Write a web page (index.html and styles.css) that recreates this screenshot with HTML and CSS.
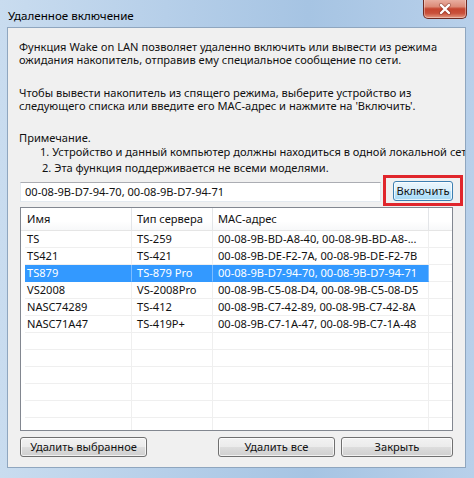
FILE: index.html
```html
<!DOCTYPE html>
<html>
<head>
<meta charset="utf-8">
<link rel="stylesheet" href="styles.css">
</head>
<body>
<div class="window">
  <div class="titlebar">
    <span class="title">Удаленное включение</span>
    <div class="close">
      <svg width="14" height="12" viewBox="0 0 14 12"><path d="M3 2 L11 10 M11 2 L3 10" stroke="#5a1a12" stroke-width="4" stroke-linecap="round" opacity="0.35"/><path d="M3 2 L11 10 M11 2 L3 10" stroke="#fff" stroke-width="2.4" stroke-linecap="round"/></svg>
    </div>
  </div>
  <div class="client">
    <p class="para">Функция Wake on LAN позволяет удаленно включить или вывести из режима<br>ожидания накопитель, отправив ему специальное сообщение по сети.</p>
    <p class="para para2">Чтобы вывести накопитель из спящего режима, выберите устройство из<br>следующего списка или введите его MAC-адрес и нажмите на 'Включить'.</p>
    <div class="note">
      <div class="note-title">Примечание.</div>
      <div class="note-item n1">1. Устройство и данный компьютер должны находиться в одной локальной сети.</div>
      <div class="note-item n2">2. Эта функция поддерживается не всеми моделями.</div>
    </div>
    <div class="mac-row">
      <div class="mac-input">00-08-9B-D7-94-70, 00-08-9B-D7-94-71</div>
      <div class="mark"><button class="btn btn-on">Включить</button></div>
    </div>
    <div class="list">
      <div class="list-head">
        <div class="hcell">Имя</div>
        <div class="hcell">Тип сервера</div>
        <div class="hcell">MAC-адрес</div>
        <div class="hcell last"></div>
      </div>
      <div class="list-body">
        <div class="row"><div class="cell c1">TS</div><div class="cell">TS-259</div><div class="cell">00-08-9B-BD-A8-40, 00-08-9B-BD-A8-...</div><div class="cell last"></div></div>
        <div class="row"><div class="cell c1">TS421</div><div class="cell">TS-421</div><div class="cell">00-08-9B-DE-F2-7A, 00-08-9B-DE-F2-7B</div><div class="cell last"></div></div>
        <div class="row sel"><div class="cell c1">TS879</div><div class="cell">TS-879 Pro</div><div class="cell">00-08-9B-D7-94-70, 00-08-9B-D7-94-71</div><div class="cell last"></div></div>
        <div class="row"><div class="cell c1">VS2008</div><div class="cell">VS-2008Pro</div><div class="cell">00-08-9B-C5-08-D4, 00-08-9B-C5-08-D5</div><div class="cell last"></div></div>
        <div class="row"><div class="cell c1">NASC74289</div><div class="cell">TS-412</div><div class="cell">00-08-9B-C7-42-89, 00-08-9B-C7-42-8A</div><div class="cell last"></div></div>
        <div class="row"><div class="cell c1">NASC71A47</div><div class="cell">TS-419P+</div><div class="cell">00-08-9B-C7-1A-47, 00-08-9B-C7-1A-48</div><div class="cell last"></div></div>
        <div class="row"><div class="cell c1"></div><div class="cell"></div><div class="cell"></div><div class="cell last"></div></div>
        <div class="row"><div class="cell c1"></div><div class="cell"></div><div class="cell"></div><div class="cell last"></div></div>
        <div class="row"><div class="cell c1"></div><div class="cell"></div><div class="cell"></div><div class="cell last"></div></div>
        <div class="row"><div class="cell c1"></div><div class="cell"></div><div class="cell"></div><div class="cell last"></div></div>
        <div class="row"><div class="cell c1"></div><div class="cell"></div><div class="cell"></div><div class="cell last"></div></div>
        <div class="row"><div class="cell c1"></div><div class="cell"></div><div class="cell"></div><div class="cell last"></div></div>
      </div>
    </div>
    <div class="buttons">
      <button class="btn btn-del-sel">Удалить выбранное</button>
      <button class="btn btn-del-all">Удалить все</button>
      <button class="btn btn-close">Закрыть</button>
    </div>
  </div>
</div>
</body>
</html>
```

FILE: styles.css
```css
* { box-sizing: border-box; }
html, body { margin: 0; padding: 0; }
body {
  width: 474px;
  height: 478px;
  overflow: hidden;
  font-family: "Noto Sans", "DejaVu Sans", sans-serif;
  font-size: 11.1px;
  color: #111;
}
.window {
  width: 474px;
  height: 478px;
  display: flex;
  flex-direction: column;
  background: linear-gradient(to right, #c9dcef 0%, #b6cfe9 35%, #a6c4e3 65%, #b8d0ea 100%);
}
.titlebar {
  height: 27px;
  flex: none;
  display: flex;
  align-items: flex-start;
  padding-left: 8px;
}
.title {
  line-height: 13px;
  margin-top: 9px;
  color: #000;
  font-size: 11.6px;
}
.close {
  margin-left: auto;
  margin-right: 7px;
  margin-top: -1px;
  width: 44px;
  height: 20px;
  border: 1px solid #6e2a22;
  border-top: none;
  border-radius: 0 0 5px 5px;
  background: linear-gradient(to bottom, #eab3a6 0%, #dc8b78 40%, #c5452f 52%, #c9503a 75%, #e49a82 100%);
  box-shadow: inset 0 0 0 1px rgba(255,255,255,0.35);
  display: flex;
  align-items: center;
  justify-content: center;
}
.client {
  margin: 0 8px 0 7px;
  height: 441px;
  flex: none;
  background: #f0f0f0;
  border: 1px solid #8fa6bf;
  padding: 12px 12px 0 12px;
  overflow: hidden;
  white-space: nowrap;
}
.para {
  margin: 0;
  line-height: 13px;
  margin-left: -1px;
}
.para2 { margin-top: 20px; }
.note { margin-top: 19px; margin-left: -1px; }
.note-title { line-height: 13px; }
.note-item { line-height: 16px; }
.n1 { padding-left: 21px; }
.n2 { padding-left: 23px; }
.mac-row {
  display: flex;
  align-items: flex-start;
  margin-top: -1px;
  margin-right: -10px;
}
.mac-input {
  flex: 1;
  margin-top: 7px;
  height: 20px;
  background: #fff;
  border: 1px solid #e3e9ef;
  border-top-color: #abadb3;
  padding-left: 4px;
  line-height: 18px;
  color: #111;
}
.mark {
  margin-left: 2px;
  width: 80px;
  height: 31px;
  border: 3px solid #e0262c;
  padding: 3px 0 0 7px;
}
.btn {
  font-family: "Noto Sans", "DejaVu Sans", sans-serif;
  font-size: 11.1px;
  color: #111;
  height: 20px;
  padding: 0;
  border: 1px solid #707070;
  border-radius: 3px;
  background: linear-gradient(to bottom, #f2f2f2 0%, #ebebeb 50%, #dddddd 51%, #cfcfcf 100%);
  box-shadow: inset 0 0 0 1px rgba(255,255,255,0.7);
  line-height: 16px;
}
.btn-on {
  width: 60px;
  border-color: #3c7fb1;
  background: linear-gradient(to bottom, #eaf6fd 0%, #d9f0fc 50%, #bee6fd 51%, #a7d9f5 100%);
}
.list {
  margin-top: 1px;
  height: 224px;
  border: 1px solid #828790;
  background: #fff;
  overflow: hidden;
}
.list-head {
  display: grid;
  grid-template-columns: 111px 81px 216px 1fr;
  height: 23px;
  border-bottom: 1px solid #e5e5e5;
  background: linear-gradient(to bottom, #ffffff 0%, #ffffff 60%, #f7f8f9 100%);
}
.hcell {
  border-right: 1px solid #e3e5e8;
  line-height: 22px;
  padding-left: 5px;
}
.hcell:first-child { padding-left: 6px; }
.hcell.last { border-right: none; }
.list-body { display: flex; flex-direction: column; }
.row {
  display: grid;
  grid-template-columns: 107px 81px 216px 1fr;
  height: 17px;
  padding-left: 4px;
  flex: none;
}
.cell {
  border-right: 1px solid #efefef;
  border-bottom: 1px solid #efefef;
  line-height: 16px;
  padding-left: 5px;
  overflow: hidden;
}
.cell.c1 { padding-left: 2px; }
.cell.last { border-right: none; }
.row.sel .cell { background: #3399ff; color: #fff; border-right-color: #7dbdff; border-bottom-color: #3399ff; }
.row.sel .cell.last { background: #fff; border-bottom-color: #efefef; }
.buttons {
  display: flex;
  margin-top: 6px;
}
.btn-del-sel { width: 127px; }
.btn-del-all { width: 117px; margin-left: auto; }
.btn-close { width: 112px; margin-left: 6px; }
```
